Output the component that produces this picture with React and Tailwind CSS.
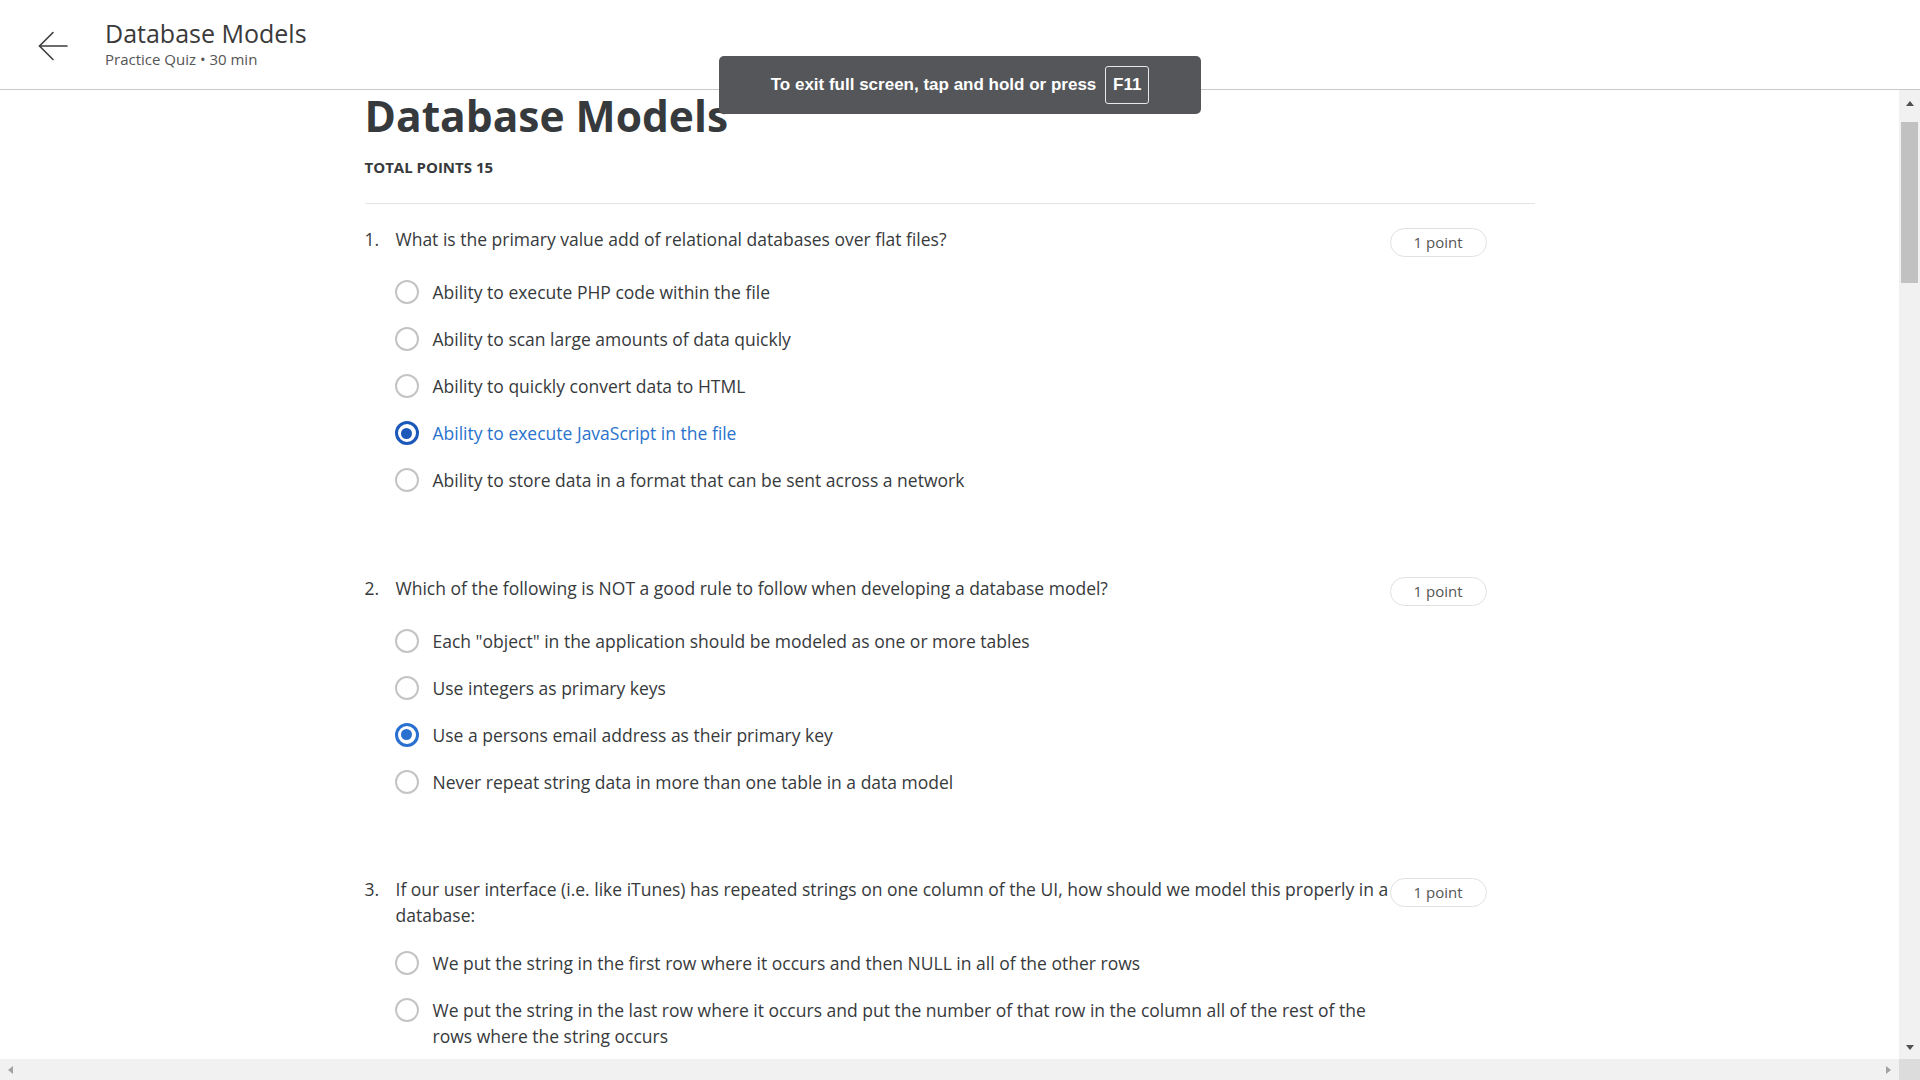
import React from 'react';

const questions = [
  {
    text: "What is the primary value add of relational databases over flat files?",
    selected: 3,
    focused: true,
    options: [
      "Ability to execute PHP code within the file",
      "Ability to scan large amounts of data quickly",
      "Ability to quickly convert data to HTML",
      "Ability to execute JavaScript in the file",
      "Ability to store data in a format that can be sent across a network",
    ],
  },
  {
    text: "Which of the following is NOT a good rule to follow when developing a database model?",
    selected: 2,
    focused: false,
    options: [
      'Each "object" in the application should be modeled as one or more tables',
      "Use integers as primary keys",
      "Use a persons email address as their primary key",
      "Never repeat string data in more than one table in a data model",
    ],
  },
  {
    text: "If our user interface (i.e. like iTunes) has repeated strings on one column of the UI, how should we model this properly in a database:",
    selected: -1,
    focused: false,
    options: [
      "We put the string in the first row where it occurs and then NULL in all of the other rows",
      "We put the string in the last row where it occurs and put the number of that row in the column all of the rest of the rows where the string occurs",
    ],
  },
];

const Radio = ({ checked, focused }) => {
  if (!checked) {
    return <span className="mt-[1px] w-[24px] h-[24px] shrink-0 rounded-full border-2 border-[#c4c4c4] bg-white" />;
  }
  return (
    <span
      className={
        focused
          ? "mt-[1px] w-[24px] h-[24px] shrink-0 rounded-full border-[3px] border-[#1c58b9] flex items-center justify-center"
          : "mt-[1px] w-[24px] h-[24px] shrink-0 rounded-full border-[3px] border-[#2a70d0] flex items-center justify-center"
      }
    >
      <span className={focused ? "w-[11px] h-[11px] rounded-full bg-[#1c58b9]" : "w-[11px] h-[11px] rounded-full bg-[#2a70d0]"} />
    </span>
  );
};

const Question = ({ q, index }) => (
  <div className="mr-[48px] mb-[71px]">
    <div className="flex items-start">
      <span className="w-[31px] shrink-0 leading-[26px]">{index + 1}.</span>
      <p className="flex-1 min-w-0 leading-[26px]">{q.text}</p>
      <span className="mt-[2px] w-[97px] h-[29px] shrink-0 rounded-full border border-[#e1e1e1] flex items-center justify-center text-[15px] text-[#555]">
        1 point
      </span>
    </div>
    <ul className="mt-[11.5px] ml-[31px] mr-[97px]">
      {q.options.map((opt, i) => (
        <li key={i} className="flex items-start gap-[14px] py-[10.5px] -ml-[1px]">
          <Radio checked={i === q.selected} focused={q.focused} />
          <span className={i === q.selected && q.focused ? "leading-[26px] text-[#2a73cc]" : "leading-[26px]"}>{opt}</span>
        </li>
      ))}
    </ul>
  </div>
);

export default function App() {
  return (
    <div className="relative h-screen w-full flex flex-col overflow-hidden bg-white text-[#373a3c] font-['Open_Sans',sans-serif]">
      {/* top bar */}
      <header className="h-[90px] shrink-0 border-b border-[#c9c9c9] flex items-start">
        <button className="ml-[38px] mt-[31px] text-[#3c3c3c]">
          <svg width="30" height="30" viewBox="0 0 30 30" fill="none" stroke="currentColor" strokeWidth="1.6" strokeLinecap="round" strokeLinejoin="round">
            <path d="M29 15H1.5" />
            <path d="M15 1.5L1.5 15L15 28.5" />
          </svg>
        </button>
        <div className="ml-[37px] mt-[17px]">
          <h1 className="text-[25px] leading-8 text-[#3a3a3a]">Database Models</h1>
          <p className="text-[15px] leading-5 text-[#555]">Practice Quiz • 30 min</p>
        </div>
      </header>

      <div className="flex-1 flex min-h-0">
        <main className="flex-1 overflow-hidden">
          <div className="max-w-[1170px] mx-auto pt-[2px] text-[17.5px]">
            <h2 className="text-[42.5px] leading-[48px] font-bold text-[#373a3c]">Database Models</h2>
            <p className="mt-[17px] text-[15px] leading-5 font-bold">TOTAL POINTS 15</p>
            <hr className="mt-[26px] border-t border-[#e3e3e3]" />
            <div className="mt-[22px]">
              {questions.map((q, i) => (
                <Question key={i} q={q} index={i} />
              ))}
            </div>
          </div>
        </main>

        {/* vertical scrollbar */}
        <div className="w-[21px] shrink-0 bg-[#f1f1f1] flex flex-col">
          <div className="h-[26px] flex items-center justify-center">
            <span className="w-0 h-0 border-l-[4.5px] border-r-[4.5px] border-b-[5px] border-l-transparent border-r-transparent border-b-[#505050]" />
          </div>
          <div className="mt-[6px] mx-[2px] h-[161px] bg-[#c1c1c1]" />
          <div className="flex-1" />
          <div className="h-[24px] flex items-center justify-center">
            <span className="w-0 h-0 border-l-[4.5px] border-r-[4.5px] border-t-[5px] border-l-transparent border-r-transparent border-t-[#505050]" />
          </div>
        </div>
      </div>

      {/* horizontal scrollbar */}
      <div className="h-[21px] shrink-0 flex">
        <div className="flex-1 bg-[#f1f1f1] flex items-center justify-between px-[8px]">
          <span className="w-0 h-0 border-t-[4.5px] border-b-[4.5px] border-r-[5px] border-t-transparent border-b-transparent border-r-[#a3a3a3]" />
          <span className="w-0 h-0 border-t-[4.5px] border-b-[4.5px] border-l-[5px] border-t-transparent border-b-transparent border-l-[#a3a3a3]" />
        </div>
        <div className="w-[21px] bg-[#dcdcdc]" />
      </div>

      {/* full screen toast */}
      <div className="absolute top-[56px] left-1/2 -translate-x-1/2 w-[482px] h-[58px] rounded-[5px] bg-[#54565a] flex items-center justify-center gap-[9px] text-white font-['Liberation_Sans',Arial,sans-serif] font-bold text-[17px]">
        <span>To exit full screen, tap and hold or press</span>
        <span className="w-[44px] h-[38px] rounded-[3px] border border-[#e8e8e8] flex items-center justify-center">F11</span>
      </div>
    </div>
  );
}
